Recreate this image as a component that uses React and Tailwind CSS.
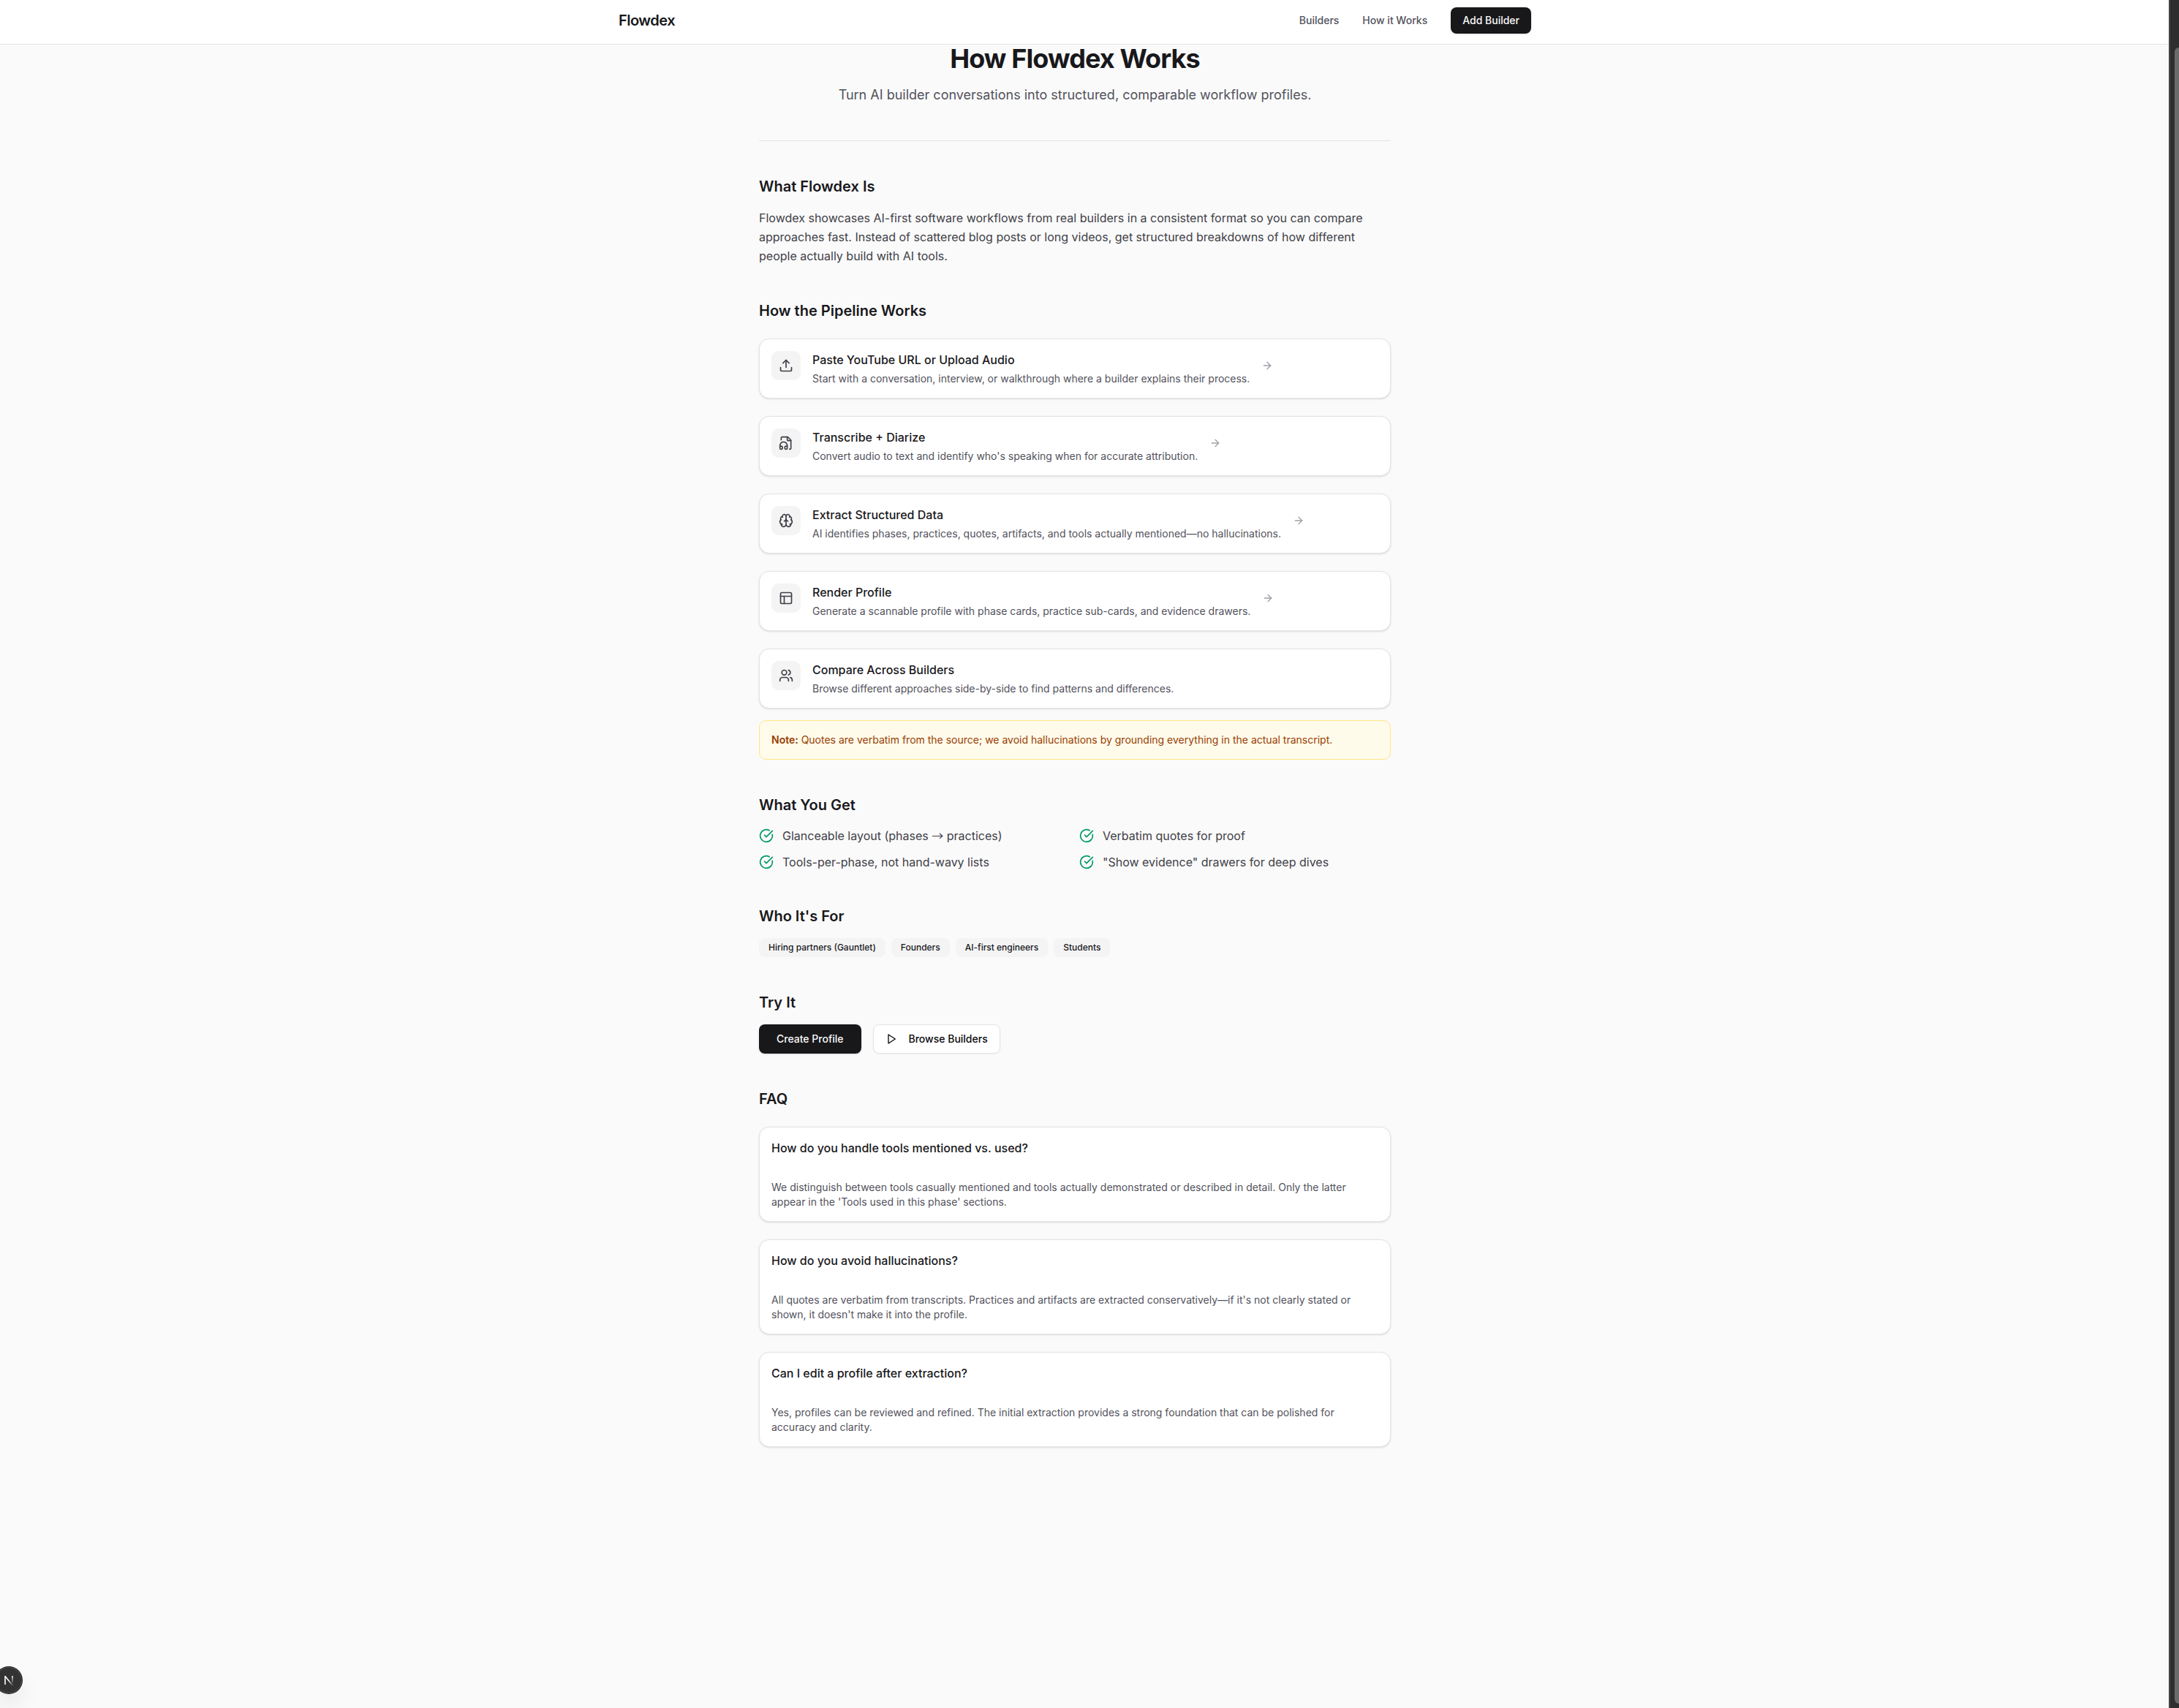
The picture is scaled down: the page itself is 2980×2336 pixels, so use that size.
import {
  Upload,
  FileHeadphone,
  Brain,
  PanelsTopLeft,
  Users,
  ArrowRight,
  CircleCheckBig,
} from "lucide-react";

const steps = [
  {
    icon: Upload,
    title: "Paste YouTube URL or Upload Audio",
    text: "Start with a conversation, interview, or walkthrough where a builder explains their process.",
  },
  {
    icon: FileHeadphone,
    title: "Transcribe + Diarize",
    text: "Convert audio to text and identify who's speaking when for accurate attribution.",
  },
  {
    icon: Brain,
    title: "Extract Structured Data",
    text: "AI identifies phases, practices, quotes, artifacts, and tools actually mentioned—no hallucinations.",
  },
  {
    icon: PanelsTopLeft,
    title: "Render Profile",
    text: "Generate a scannable profile with phase cards, practice sub-cards, and evidence drawers.",
  },
  {
    icon: Users,
    title: "Compare Across Builders",
    text: "Browse different approaches side-by-side to find patterns and differences.",
  },
];

const benefits = [
  <>
    Glanceable layout (phases <span className="font-['Noto_Sans_CJK_SC',sans-serif] leading-none">→</span>{" "}
    practices)
  </>,
  "Verbatim quotes for proof",
  "Tools-per-phase, not hand-wavy lists",
  '"Show evidence" drawers for deep dives',
];

const audiences = ["Hiring partners (Gauntlet)", "Founders", "AI-first engineers", "Students"];

const faqs = [
  {
    q: "How do you handle tools mentioned vs. used?",
    a: "We distinguish between tools casually mentioned and tools actually demonstrated or described in detail. Only the latter appear in the 'Tools used in this phase' sections.",
  },
  {
    q: "How do you avoid hallucinations?",
    a: "All quotes are verbatim from transcripts. Practices and artifacts are extracted conservatively—if it's not clearly stated or shown, it doesn't make it into the profile.",
  },
  {
    q: "Can I edit a profile after extraction?",
    a: "Yes, profiles can be reviewed and refined. The initial extraction provides a strong foundation that can be polished for accuracy and clarity.",
  },
];

function Header() {
  return (
    <header className="border-b border-zinc-200 bg-white pr-[26px]">
      <div className="mx-auto flex max-w-7xl items-center justify-between px-4 pt-2.5 pb-3.5">
        <a href="#home" className="text-xl font-semibold tracking-tight text-zinc-900">
          Flowdex
        </a>
        <nav className="flex items-center gap-8 text-sm font-medium">
          <a href="#builders" className="text-zinc-600">
            Builders
          </a>
          <a href="#how" className="text-zinc-600">
            How it Works
          </a>
          <button type="button" className="h-9 rounded-lg bg-zinc-900 px-4 text-zinc-50 shadow-sm">
            Add Builder
          </button>
        </nav>
      </div>
    </header>
  );
}

function Section({ title, children }) {
  return (
    <section>
      <h2 className="text-xl font-semibold text-zinc-900">{title}</h2>
      {children}
    </section>
  );
}

function StepCard({ step, last }) {
  const Icon = step.icon;
  return (
    <li className="flex items-start gap-4 rounded-[14px] border border-zinc-200 bg-white p-4 shadow-sm">
      <div className="flex size-10 shrink-0 items-center justify-center rounded-[10px] bg-zinc-100">
        <Icon className="size-5 text-zinc-700" />
      </div>
      <div>
        <h3 className="font-medium text-zinc-900">{step.title}</h3>
        <p className="mt-1 text-sm text-zinc-600">{step.text}</p>
      </div>
      {!last && <ArrowRight className="mt-3 size-4 shrink-0 text-zinc-400" />}
    </li>
  );
}

function PlayIcon() {
  return (
    <svg
      viewBox="0 0 24 24"
      className="size-4"
      fill="none"
      stroke="currentColor"
      strokeWidth="2"
      strokeLinecap="round"
      strokeLinejoin="round"
      aria-hidden="true"
    >
      <polygon points="6 3 20 12 6 21 6 3" />
    </svg>
  );
}

function ScrollTrack() {
  return (
    <div className="w-3.5 shrink-0 border-l-2 border-[#454545] bg-[#2e2e2e] pt-[65px] pb-1.5 pl-1.5">
      <div className="h-full rounded-l-lg bg-[#6b6b6b]" />
    </div>
  );
}

function DevBadge() {
  return (
    <button
      type="button"
      aria-label="Open developer tools"
      className="fixed bottom-5 -left-1.5 flex size-9 items-center justify-center rounded-full bg-[#333333] shadow-[0_0_0_1px_#171717,inset_0_0_0_1px_#4d4d4d,0_16px_32px_-8px_#0000003d]"
    >
      <svg viewBox="0 0 40 40" className="size-10 shrink-0" fill="none">
        <defs>
          <linearGradient id="stem" x1="25" y1="14" x2="25" y2="25" gradientUnits="userSpaceOnUse">
            <stop stopColor="white" />
            <stop offset="1" stopColor="white" stopOpacity="0" />
          </linearGradient>
          <linearGradient id="slash" x1="20" y1="20" x2="26" y2="28" gradientUnits="userSpaceOnUse">
            <stop stopColor="white" />
            <stop offset="1" stopColor="white" stopOpacity="0" />
          </linearGradient>
        </defs>
        <path d="M15 26V14.5" stroke="white" strokeWidth="1.6" />
        <path d="M14.8 14.3L25.5 27.5" stroke="url(#slash)" strokeWidth="1.6" />
        <path d="M24.2 14h1.6v11h-1.6z" fill="url(#stem)" />
      </svg>
    </button>
  );
}

export default function App() {
  return (
    <div className="flex min-h-screen bg-[#fafafa] font-['Inter',sans-serif] text-base antialiased">
      <div className="min-w-0 flex-1">
        <Header />
        <div className="pr-[26px]">
          <main className="mx-auto flex max-w-4xl flex-col gap-12 px-4 pb-12">
            <div className="border-b border-zinc-200 pb-12 text-center">
              <h1 className="text-4xl leading-[38px] font-bold tracking-tight text-zinc-900">
                How Flowdex Works
              </h1>
              <p className="mt-[17px] text-lg text-zinc-600">
                Turn AI builder conversations into structured, comparable workflow profiles.
              </p>
            </div>

            <Section title="What Flowdex Is">
              <p className="mt-4 leading-relaxed text-zinc-700">
                Flowdex showcases AI-first software workflows from real builders in a consistent format so
                you can compare approaches fast. Instead of scattered blog posts or long videos, get
                structured breakdowns of how different people actually build with AI tools.
              </p>
            </Section>

            <Section title="How the Pipeline Works">
              <ol className="mt-6 flex flex-col gap-6">
                {steps.map((step, i) => (
                  <StepCard key={step.title} step={step} last={i === steps.length - 1} />
                ))}
              </ol>
              <p className="mt-4 rounded-[10px] border border-amber-200 bg-amber-50 p-4 text-sm text-amber-800">
                <strong className="font-semibold">Note:</strong> Quotes are verbatim from the source; we
                avoid hallucinations by grounding everything in the actual transcript.
              </p>
            </Section>

            <Section title="What You Get">
              <ul className="mt-4 grid grid-cols-2 gap-3">
                {benefits.map((b, i) => (
                  <li key={i} className="flex h-6 items-center gap-3 text-zinc-700">
                    <CircleCheckBig className="size-5 shrink-0 text-emerald-600" />
                    <span>{b}</span>
                  </li>
                ))}
              </ul>
            </Section>

            <Section title="Who It's For">
              <ul className="mt-4 flex flex-wrap gap-2">
                {audiences.map((a) => (
                  <li
                    key={a}
                    className="rounded-lg border border-transparent bg-zinc-100 px-3 py-1 text-xs font-medium text-zinc-900"
                  >
                    {a}
                  </li>
                ))}
              </ul>
            </Section>

            <Section title="Try It">
              <div className="mt-4 flex flex-wrap gap-4 text-sm font-medium">
                <button type="button" className="h-10 rounded-lg bg-zinc-900 px-6 text-zinc-50 shadow-sm">
                  Create Profile
                </button>
                <button
                  type="button"
                  className="flex h-10 items-center gap-4 rounded-lg border border-zinc-200 bg-white px-4 text-zinc-950 shadow-xs"
                >
                  <PlayIcon />
                  Browse Builders
                </button>
              </div>
            </Section>

            <Section title="FAQ">
              <div className="mt-6 flex flex-col gap-6">
                {faqs.map((f) => (
                  <article key={f.q} className="rounded-[14px] border border-zinc-200 bg-white p-4 shadow-sm">
                    <h3 className="font-medium text-zinc-900">{f.q}</h3>
                    <p className="mt-8 text-sm text-zinc-600">{f.a}</p>
                  </article>
                ))}
              </div>
            </Section>
          </main>
        </div>
      </div>
      <ScrollTrack />
      <DevBadge />
    </div>
  );
}
